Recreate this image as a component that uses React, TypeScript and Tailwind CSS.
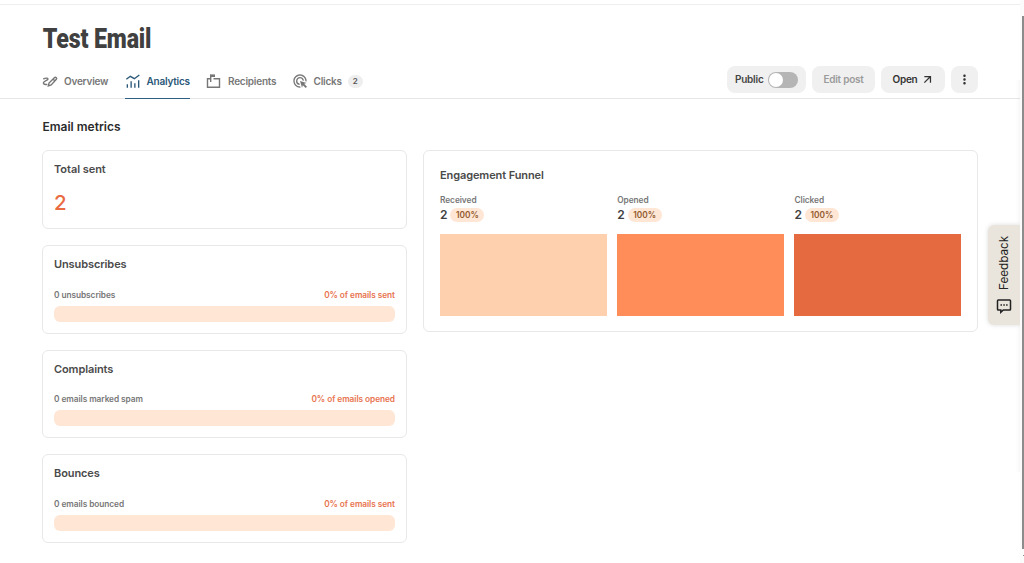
import React from 'react';
import clsx from 'clsx';
import { MdAdsClick, MdMoreVert } from 'react-icons/md';

const PenIcon = () => (
  <svg viewBox="0 0 24 24" className="h-4 w-4" fill="none" stroke="currentColor" strokeWidth="2.100">
    <path d="M2 9c3-1.500 6.800-1.800 7 0 .2 2.300-7 2.800-7 6 0 2 3 2.500 6 2" />
    <path d="M9.500 19.500l1-4.500 8-8c1-1 2.200-.8 2.900 0s.7 1.900-.2 2.800L13.800 18l-4.300 1.500zM16.500 9l3 3" />
  </svg>
);

const ChartIcon = () => (
  <svg viewBox="0 0 24 24" className="h-4 w-4" fill="none" stroke="currentColor" strokeWidth="2">
    <path d="M2 9.500l6-4.500 6 3.500L21.500 3" />
    <path d="M3.500 22v-5M9.200 22V12.500M14.800 22v-6.500M20.500 22V11" />
  </svg>
);

const MailboxIcon = () => (
  <svg viewBox="0 0 16 16" className="h-4 w-4" fill="none" stroke="currentColor" strokeWidth="1.400">
    <path d="M7.500 5.700h6v8.600H1.500V5.700H4" />
    <path d="M4.700 9V1.700" />
    <path d="M4 2.700h5" strokeWidth="2.600" />
  </svg>
);

const ArrowIcon = () => (
  <svg viewBox="0 0 10 10" className="h-[9px] w-[9px]" fill="none" stroke="currentColor" strokeWidth="1.400">
    <path d="M1.500 1.700h6.800v6.800M8 2L1.500 8.500" />
  </svg>
);

const CommentIcon = () => (
  <svg viewBox="0 0 16 16" className="mt-[8px] h-4 w-4" fill="none" stroke="currentColor" strokeWidth="1.500">
    <path d="M2.300 2h11.400q.8 0 .8.800v8.400q0 .8-.8.800H7.300L4.800 14.300V12H2.300q-.8 0-.8-.8V2.800q0-.8.800-.8z" />
    <path d="M4.500 7H6M7.300 7h1.500M10.100 7h1.500" />
  </svg>
);

const tabs = [
  { label: 'Overview', icon: <PenIcon />, width: 'w-[66px]' },
  { label: 'Analytics', icon: <ChartIcon />, width: 'w-[65px]', active: true },
  { label: 'Recipients', icon: <MailboxIcon />, width: 'w-[69px]' },
  { label: 'Clicks', icon: <MdAdsClick size={16} />, width: 'w-[70px]', count: 2 },
];

const metrics = [
  { title: 'Unsubscribes', left: '0 unsubscribes', right: '0% of emails sent' },
  { title: 'Complaints', left: '0 emails marked spam', right: '0% of emails opened' },
  { title: 'Bounces', left: '0 emails bounced', right: '0% of emails sent' },
];

const funnel = [
  { label: 'Received', color: 'bg-[#ffd0ad]' },
  { label: 'Opened', color: 'bg-[#ff8d5a]' },
  { label: 'Clicked', color: 'bg-[#e56a40]' },
];

const Header: React.FC = () => (
  <header className="h-[95px] w-[1020px] border-b border-t border-b-[#e6e6e6] border-t-[#eeeeee] px-[42px] pt-[19px]">
    <h1 className="h-[30px] w-max origin-left scale-x-[0.845] whitespace-nowrap pl-px font-['Roboto'] text-[27.500px] font-black leading-[30px] tracking-[-0.200px] text-[#404040]">
      Test Email
    </h1>
    <div className="mt-[12px] flex justify-between">
      <nav className="flex h-[33px] gap-[16.500px]">
        {tabs.map((tab) => (
          <div
            key={tab.label}
            className={clsx(
              'flex items-center gap-[6px] whitespace-nowrap border-b pb-[2px] text-[10px] font-semibold tracking-[-0.230px]',
              tab.width,
              tab.active ? 'border-[#2f5f83] text-[#2b5878]' : 'border-transparent text-[#777777]'
            )}
          >
            <span className="shrink-0">{tab.icon}</span>
            {tab.label}
            {tab.count && (
              <span className="flex h-[13px] w-[15px] shrink-0 items-center justify-center rounded-full bg-[#eeeeee] text-[8px] text-[#555555]">
                {tab.count}
              </span>
            )}
          </div>
        ))}
      </nav>
      <div className="flex h-[27px] gap-[6px] text-[10px] font-semibold tracking-[-0.230px] text-[#333333]">
        <div className="flex w-[79px] items-center justify-between rounded-lg bg-[#f0f0f0] pl-2 pr-[8px] text-[#444444]">
          Public
          <span className="flex h-4 w-[30px] items-center rounded-full bg-[#b5b5b5] pl-px">
            <span className="h-[14px] w-[14px] rounded-full bg-white" />
          </span>
        </div>
        <button className="w-[63px] rounded-lg bg-[#f0f0f0] text-[#9b9b9b]">Edit post</button>
        <button className="flex w-[64px] items-center justify-center gap-[5px] rounded-lg bg-[#f0f0f0] pr-[2px]">
          Open <ArrowIcon />
        </button>
        <button className="flex w-[27px] items-center justify-center rounded-lg bg-[#f0f0f0]">
          <MdMoreVert size={15} />
        </button>
      </div>
    </div>
  </header>
);

const App: React.FC = () => {
  return (
    <div className="relative h-[563px] w-[1024px] overflow-hidden bg-white pt-1 font-['Inter',sans-serif]">
      <Header />
      <main className="px-[42px] pt-[20px]">
        <h2 className="h-4 pl-[0.500px] text-[12px] font-semibold leading-4 text-[#2b2b2b]">Email metrics</h2>
        <div className="mt-[15px] flex items-start gap-4">
          <div className="flex w-[365px] flex-col gap-4">
            <section className="h-[79px] rounded-md border border-[#e8e8e8] px-[11px] pt-[10px]">
              <h3 className="text-[11px] font-semibold leading-4 tracking-[-0.050px] text-[#4a4a4a]">Total sent</h3>
              <p className="mt-[14px] text-[20.500px] font-medium leading-6 text-[#e96b42]">2</p>
            </section>
            {metrics.map((metric) => (
              <section key={metric.title} className="h-[88.600px] rounded-md border border-[#e8e8e8] px-[11px] pt-[10px]">
                <h3 className="text-[11px] font-semibold leading-4 tracking-[-0.100px] text-[#4a4a4a]">{metric.title}</h3>
                <div className="mt-[16.500px] flex justify-between text-[8.300px] font-semibold leading-3 tracking-[-0.060px]">
                  <span className="text-[#777777]">{metric.left}</span>
                  <span className="text-[#e8744f]">{metric.right}</span>
                </div>
                <div className="mt-[5px] h-4 rounded-[6px] bg-[#ffe6d5]" />
              </section>
            ))}
          </div>

          <section className="h-[182px] w-[555px] rounded-md border border-[#e8e8e8] px-4 pt-4">
            <h3 className="text-[11px] font-semibold leading-4 tracking-[-0.100px] text-[#4a4a4a]">Engagement Funnel</h3>
            <div className="mt-[10px] grid grid-cols-3 gap-[10.700px]">
              {funnel.map((step) => (
                <div key={step.label}>
                  <p className="text-[8.300px] font-semibold leading-[14px] tracking-[-0.050px] text-[#777777]">{step.label}</p>
                  <div className="flex h-[15px] items-center gap-[3px]">
                    <span className="text-[12px] font-semibold leading-[15px] text-[#404040]">2</span>
                    <span className="mt-px flex h-[14px] w-[34px] items-center justify-center rounded-full bg-[#ffe6d5] text-[8.300px] font-semibold text-[#925b2e]">
                      100%
                    </span>
                  </div>
                  <div className={clsx('mt-[12px] h-[81.500px]', step.color)} />
                </div>
              ))}
            </div>
          </section>
        </div>
      </main>

      {/* Faint shade beside the scrollbar */}
      <div className="absolute left-[1016px] top-[80px] h-[392px] w-1 bg-gradient-to-r from-black/0 to-black/3" />

      {/* Feedback tab */}
      <button className="absolute left-[988px] top-[225px] flex h-[100px] w-8 flex-col items-center rounded-l-md bg-[#e9e4dc] pt-[10px] text-[#222222] shadow-[0_0_5px_rgba(0,0,0,0.14)]">
        <span className="h-[55px] rotate-180 whitespace-nowrap text-[11.700px] leading-4 [writing-mode:vertical-rl]">
          Feedback
        </span>
        <CommentIcon />
      </button>

      {/* Scrollbar */}
      <div className="absolute left-[1020px] top-0 h-full w-1 bg-[#fbfbfb]">
        <div className="ml-[2px] mt-4 h-[533px] w-[2px] bg-[#8c8c8c]" />
        <div className="ml-[3px] mt-[6px] h-px w-px bg-[#8c8c8c]" />
      </div>
    </div>
  );
};

export default App;
